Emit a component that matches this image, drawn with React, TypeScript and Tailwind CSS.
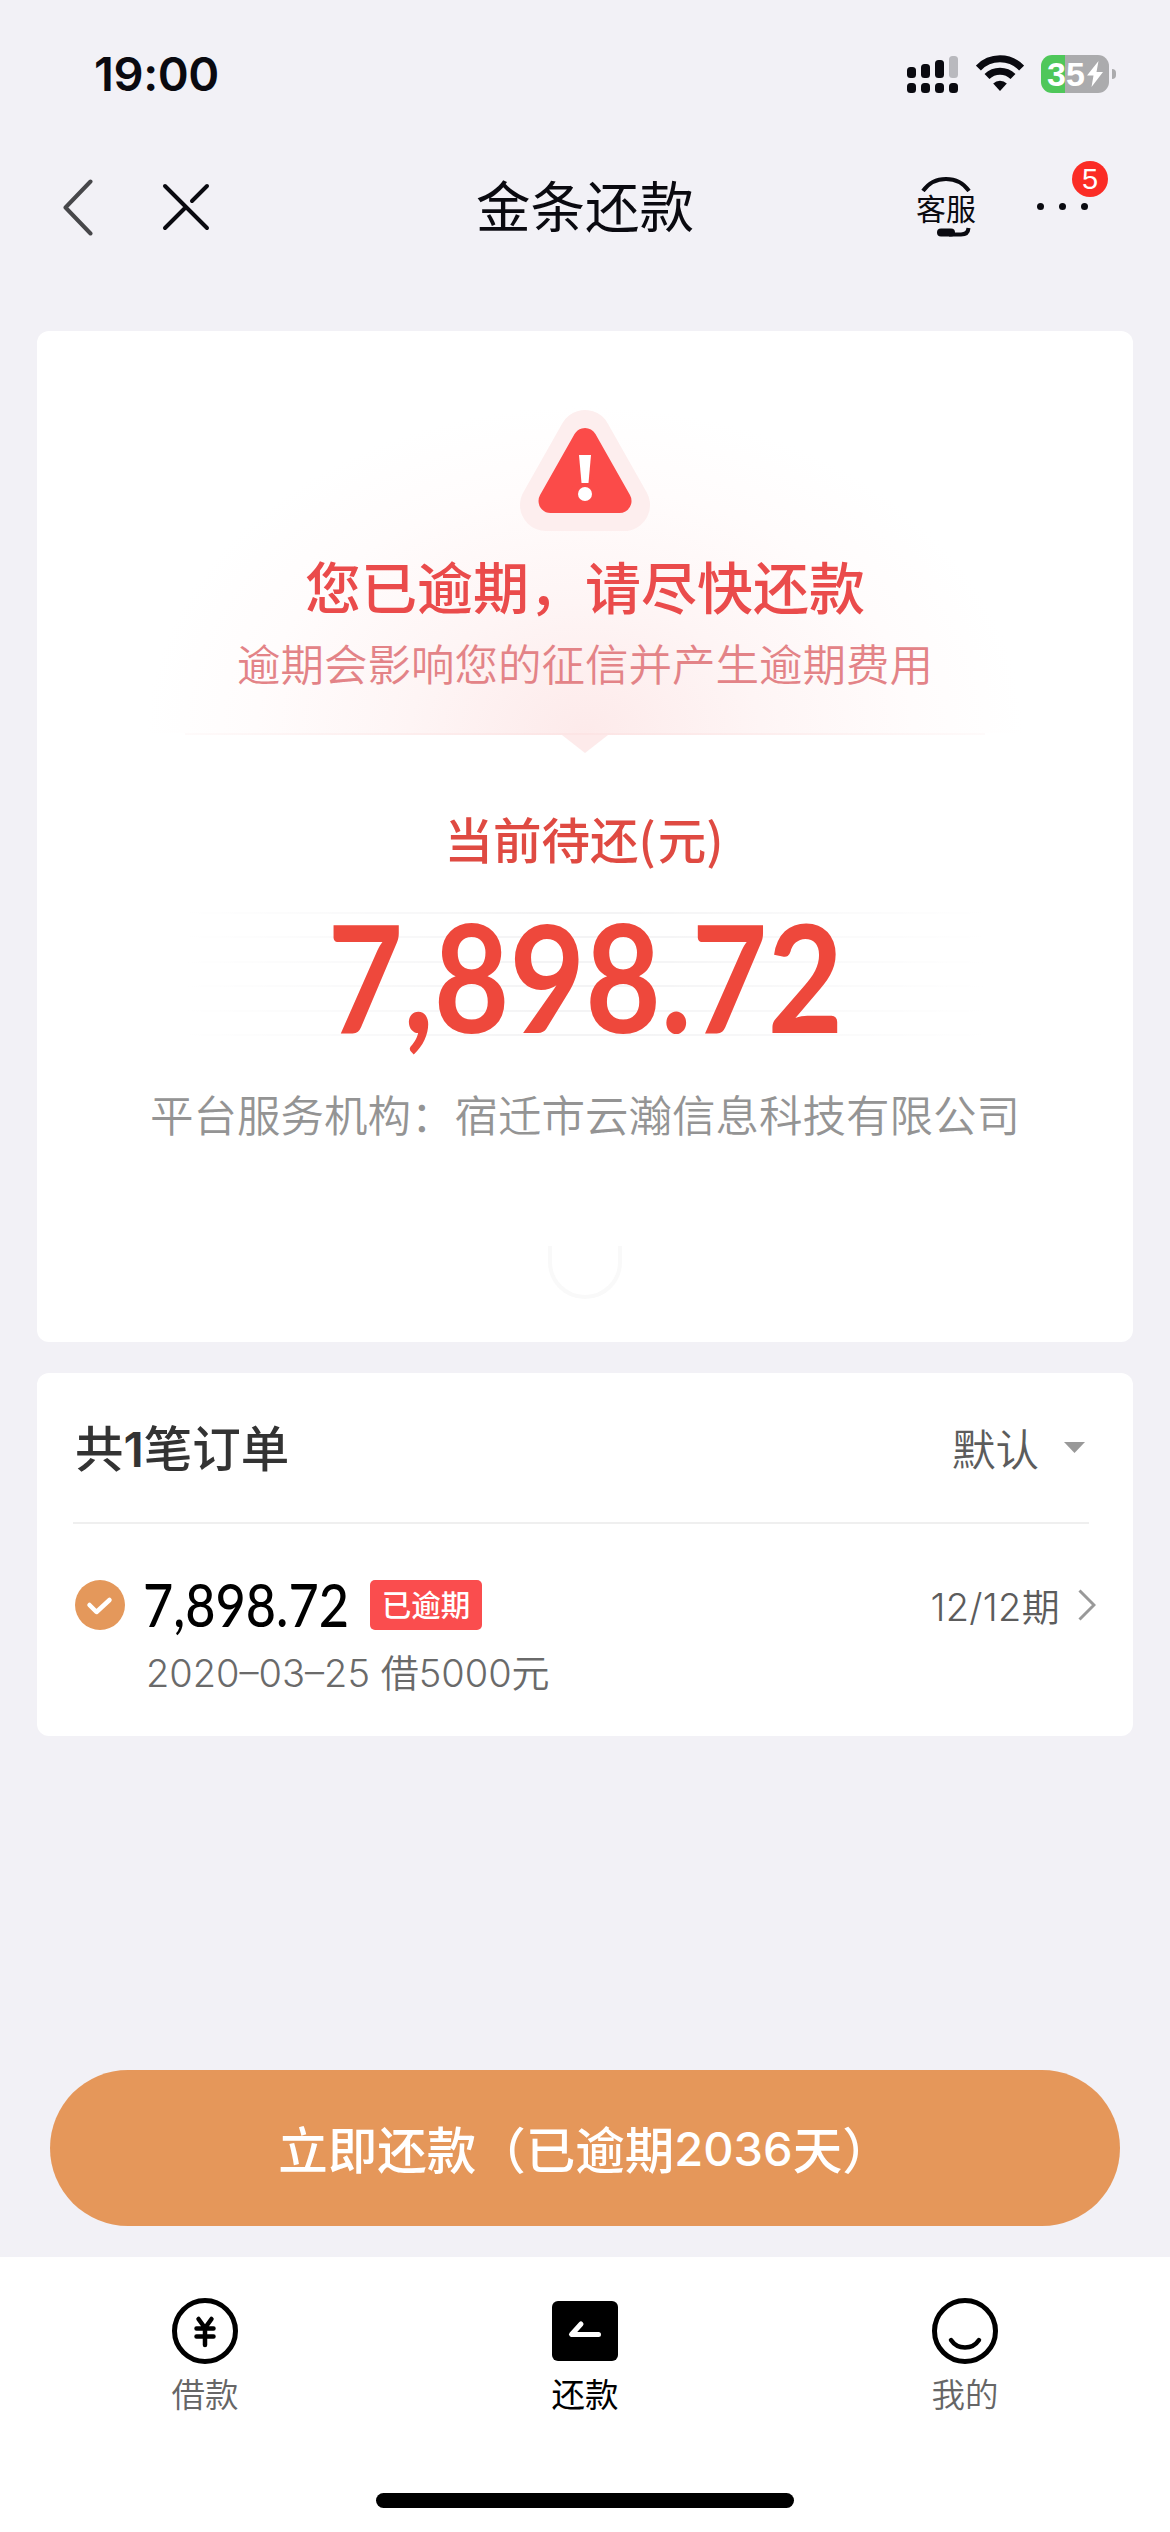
import type { ReactNode } from "react";

function StatusBar() {
  return (
    <div className="flex h-[140px] items-start justify-between pr-[54px] pl-[94px] pt-[50px]">
      <span className="font-['Inter','Noto_Sans_CJK_SC',sans-serif] text-[47px] leading-[48px] font-semibold tracking-[-0.4px] text-[#0a0a10]">
        19:00
      </span>
      <div className="flex h-[48px] items-center gap-[17px]">
        <svg width="52" height="38" viewBox="0 0 52 38" fill="#0a0a10">
          <rect x="0" y="12" width="9" height="11" rx="3.5" />
          <rect x="14" y="9" width="9" height="14" rx="3.5" />
          <rect x="28" y="5" width="9" height="18" rx="3.5" />
          <rect x="42" y="1" width="9" height="22" rx="3.5" fill="#b9b9be" />
          <rect x="0" y="28" width="9" height="10" rx="3.5" />
          <rect x="14" y="28" width="9" height="10" rx="3.5" />
          <rect x="28" y="28" width="9" height="10" rx="3.5" />
          <rect x="42" y="28" width="9" height="10" rx="3.5" />
        </svg>
        <svg width="48" height="38" viewBox="0 0 48 38" fill="none" stroke="#0a0a10" strokeWidth="7">
          <path d="M2.4 13 A30 30 0 0 1 45.6 13" />
          <path d="M11 21.6 A18.5 18.5 0 0 1 37 21.6" />
          <path d="M17.2 28.6 A9.6 9.6 0 0 1 30.8 28.6 L24 36 Z" fill="#0a0a10" stroke="none" />
        </svg>
        <div className="flex items-center gap-[3px]">
          <div className="flex h-[38px] w-[68px] items-center justify-center rounded-[11px] bg-linear-to-r from-[#4fc75a] from-[35%] to-[#ababad] to-[35%]">
            <span className="font-['Liberation_Sans',sans-serif] text-[34px] leading-none font-bold text-white">35</span>
            <svg className="ml-[2px]" width="16" height="26" viewBox="0 0 16 26" fill="#fff">
              <path d="M11.5 0 L0 14.5 H6.5 L4.5 26 L16 11 H9.5 Z" />
            </svg>
          </div>
          <div className="h-[10px] w-[4px] rounded-r-[4px] bg-[#ababad]" />
        </div>
      </div>
    </div>
  );
}

function NavBar() {
  return (
    <div className="grid h-[134px] grid-cols-3 items-center pb-[1px]">
      <div className="flex items-center pl-[62px]">
        <svg width="32" height="58" viewBox="0 0 32 58" fill="none" stroke="#47474a" strokeWidth="4" strokeLinecap="round" strokeLinejoin="round">
          <path d="M28.5 3.5 L3.5 29.5 L28.5 55.5" />
        </svg>
        <svg className="ml-[67px]" width="50" height="50" viewBox="0 0 50 50" fill="none" stroke="#0a0a10" strokeWidth="4" strokeLinecap="round">
          <path d="M4 4 L46 46 M46 4 L31 19 M24.500 25.500 L4 46" />
        </svg>
      </div>
      <h1 className="mb-[6px] text-center text-[54.500px] leading-[64px] font-normal text-[#0a0a10]">金条还款</h1>
      <div className="flex items-center pl-[136px]">
        <div className="flex h-[62px] w-[60px] flex-col items-center">
          <svg width="50" height="16" viewBox="0 0 50 16" fill="none" stroke="#0a0a10" strokeWidth="4">
            <path d="M2 15 A28 28 0 0 1 48 15" />
          </svg>
          <span className="-mt-[2px] text-[30px] leading-[34px] whitespace-nowrap text-[#0a0a10]">客服</span>
          <svg className="mt-[3px] ml-[16px]" width="34" height="10" viewBox="0 0 34 10" fill="none" stroke="#0a0a10" strokeLinecap="round">
            <path d="M4 5.500 H14" strokeWidth="8" />
            <path d="M12 7.500 H24 Q31 7.500 31.500 1" strokeWidth="4" strokeLinecap="butt" />
          </svg>
        </div>
        <div className="relative ml-[61px] flex w-[51px] items-center justify-between">
          <i className="size-[7px] rounded-full bg-[#0a0a10]" />
          <i className="size-[7px] rounded-full bg-[#0a0a10]" />
          <i className="size-[7px] rounded-full bg-[#0a0a10]" />
          <span className="absolute -top-[42px] left-[35px] flex size-[36px] items-center justify-center rounded-full bg-[#fb2c25] font-['Liberation_Sans',sans-serif] text-[29px] leading-none text-white">
            5
          </span>
        </div>
      </div>
    </div>
  );
}

function WarningIcon() {
  return (
    <svg width="134" height="128" viewBox="0 0 134 128">
      <path d="M67 30 L106 99 H28 Z" fill="#fdeeee" stroke="#fdeeee" strokeWidth="52" strokeLinejoin="round" />
      <path d="M67 34 L101.500 95 H32.500 Z" fill="#fb4b49" stroke="#fb4b49" strokeWidth="24" strokeLinejoin="round" />
      <path d="M61 49 H73 L70.500 77 H63.500 Z" fill="#fff" />
      <circle cx="67" cy="88" r="7" fill="#fff" />
    </svg>
  );
}

function OverduePanel() {
  return (
    <section className="flex h-[1011px] flex-col items-center rounded-[12px] bg-white">
      <div className="mt-[75px] flex h-[327px] w-[876px] flex-col items-center bg-[radial-gradient(ellipse_50%_100%_at_50%_100%,#fdeaea_0%,#fef5f5_40%,#fffcfc_75%,#ffffff_100%)]">
        <WarningIcon />
        <h2 className="mt-[15px] text-[56px] leading-[72px] font-medium text-[#ea4b4b]">您已逾期，请尽快还款</h2>
        <p className="mt-[14px] text-[43.500px] leading-[56px] font-[350] whitespace-nowrap text-[#e38387]">
          逾期会影响您的征信并产生逾期费用
        </p>
      </div>
      <div className="h-[2px] w-[800px] bg-linear-to-r from-[#fefafa] via-[#fce4e4] to-[#fefafa]" />
      <svg width="46" height="18" viewBox="0 0 46 18" fill="#fdeaea">
        <path d="M0 0 H46 L23 18 Z" />
      </svg>
      <p className="mt-[53px] text-[48.500px] leading-[64px] font-medium text-[#df4a42]">
        当前待还<span className="tracking-[2px]">(</span>元<span className="tracking-[2px]">)</span>
      </p>
      <div className="mt-[42px] flex h-[125px] w-[800px] items-center justify-center bg-[linear-gradient(to_right,white,transparent_45%,transparent_55%,white),repeating-linear-gradient(to_bottom,#f4f4f5_0,#f4f4f5_2px,#fff_2px,#fff_24.400px)]">
        <span className="scale-x-[0.87] font-['Lato',sans-serif] text-[150px] leading-none font-bold text-[#ee483c]">7,898.72</span>
      </div>
      <p className="mt-[47px] text-[43.500px] leading-[60px] font-[350] whitespace-nowrap text-[#949494]">
        平台服务机构：宿迁市云瀚信息科技有限公司
      </p>
      <svg className="mt-[94px]" width="76" height="62" viewBox="0 0 76 62" fill="none" stroke="#f9f9f9" strokeWidth="4">
        <path d="M3 8 V24 A35 35 0 0 0 73 24 V8" />
      </svg>
    </section>
  );
}

function OrderPanel() {
  return (
    <section className="mt-[31px] flex h-[363px] flex-col rounded-[12px] bg-white">
      <header className="mr-[44px] ml-[36px] flex h-[151px] items-center justify-between border-b-2 border-[#efefef] pr-[4px] pl-[2px]">
        <h3 className="flex items-baseline text-[48.500px] leading-[64px] font-medium text-[#333]">
          <span>共</span>
          <span className="font-['Inter',sans-serif] text-[48px] font-semibold">1</span>
          <span>笔订单</span>
        </h3>
        <div className="flex items-center gap-[25px]">
          <span className="text-[43.500px] leading-[64px] font-[350] text-[#5c5c5c]">默认</span>
          <svg width="21" height="11" viewBox="0 0 21 11" fill="#999">
            <path d="M0 0 H21 L10.500 11 Z" />
          </svg>
        </div>
      </header>
      <div className="mt-[50px] flex h-[62px] items-center pr-[37px] pl-[38px]">
        <svg width="50" height="50" viewBox="0 0 50 50">
          <circle cx="25" cy="25" r="25" fill="#e4985b" />
          <path d="M14.500 25 L21.500 32 L34.500 20" fill="none" stroke="#fff" strokeWidth="4.500" strokeLinecap="round" strokeLinejoin="round" />
        </svg>
        <span className="ml-[18px] w-[227px] origin-left scale-x-[0.87] pb-[2px] font-['Lato',sans-serif] text-[60px] leading-[60px] font-medium text-black">
          7,898.72
        </span>
        <span className="flex h-[50px] w-[112px] items-center justify-center rounded-[5px] bg-[#fa4d4e] pb-[2px] text-[29.500px] leading-none font-medium text-white">
          已逾期
        </span>
        <span className="mt-[3px] ml-auto font-['Inter','Noto_Sans_CJK_SC',sans-serif] text-[38px] leading-[50px] font-[350] tracking-[0.3px] text-[#5c5c5c]">12/12期</span>
        <svg className="ml-[18px]" width="18" height="32" viewBox="0 0 18 32" fill="none" stroke="#999" strokeWidth="3">
          <path d="M1.500 1.500 L16 16 L1.500 30.500" />
        </svg>
      </div>
      <p className="mt-[12px] ml-[109px] font-['Inter','Noto_Sans_CJK_SC',sans-serif] text-[38px] leading-[50px] font-[350] text-[#6a6a6a]">
        2020–03–25 借5000元
      </p>
    </section>
  );
}

function Tab({ label, active, children }: { label: string; active?: boolean; children: ReactNode }) {
  return (
    <div className="flex w-[380px] flex-col items-center">
      <svg width="68" height="68" viewBox="0 0 68 68" fill="none" strokeLinecap="round" strokeLinejoin="round">
        {children}
      </svg>
      <span className={active ? "mt-[6px] text-[33.500px] leading-[44px] text-black" : "mt-[6px] text-[33.500px] leading-[44px] font-[350] text-[#666]"}>
        {label}
      </span>
    </div>
  );
}

function TabBar() {
  return (
    <nav className="flex h-[275px] flex-col items-center bg-white pt-[40px]">
      <div className="flex justify-center">
        <Tab label="借款">
          <circle cx="34" cy="34" r="30.500" stroke="#000" strokeWidth="5" />
          <path d="M27.500 22 L34 31 L40.500 22 M34 31 V48 M25.500 31.500 H42.500 M25.500 39.500 H42.500" stroke="#000" strokeWidth="4.500" />
        </Tab>
        <Tab label="还款" active>
          <rect x="1" y="4" width="66" height="60" rx="6" fill="#000" />
          <path d="M30 27 L20.500 37.500 H47.500" stroke="#fff" strokeWidth="5" />
        </Tab>
        <Tab label="我的">
          <circle cx="34" cy="34" r="30.500" stroke="#000" strokeWidth="5" />
          <path d="M20 43 Q25 50.500 34 50.500 Q43 50.500 48 43" stroke="#000" strokeWidth="4.500" />
        </Tab>
      </div>
      <div className="mt-[78px] h-[15px] w-[418px] rounded-full bg-black" />
    </nav>
  );
}

export default function App() {
  return (
    <div className="flex h-[2532px] w-[1170px] flex-col overflow-hidden bg-[#f2f1f6] font-['Noto_Sans_CJK_SC',sans-serif]">
      <StatusBar />
      <NavBar />
      <main className="mt-[57px] px-[37px]">
        <OverduePanel />
        <OrderPanel />
      </main>
      <div className="mt-auto px-[50px] pb-[31px]">
        <button className="flex h-[156px] w-full items-center justify-center rounded-full bg-[#e5975a] font-['Noto_Sans_CJK_SC',sans-serif] text-[49.500px] leading-none font-medium text-white">
          立即还款（已逾期<span className="font-['Inter',sans-serif] text-[47px] font-medium">2036</span>天）
        </button>
      </div>
      <TabBar />
    </div>
  );
}
